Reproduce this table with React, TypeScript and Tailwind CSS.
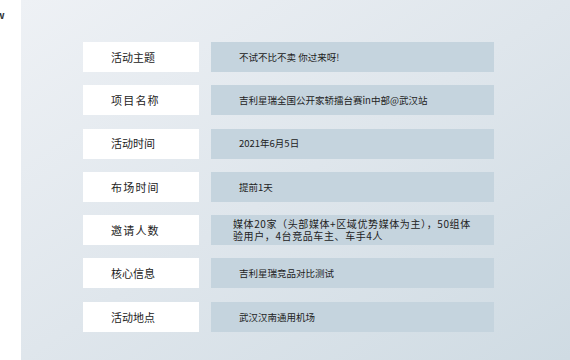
import React from "react";

const rows: { label: string; value: React.ReactNode; wide?: boolean }[] = [
  { label: "活动主题", value: "不试不比不卖 你过来呀!" },
  { label: "项目名称", value: "吉利星瑞全国公开家轿擂台赛in中部@武汉站", wide: true },
  { label: "活动时间", value: "2021年6月5日" },
  { label: "布场时间", value: "提前1天", wide: true },
  {
    label: "邀请人数",
    wide: true,
    value: (
      <div className="flex flex-col text-[10px] leading-[12px] tracking-[0.6px] -ml-[6px]">
        <span className="block">媒体20家（头部媒体+区域优势媒体为主），50组体</span>
        <span className="block">验用户，4台竞品车主、车手4人</span>
      </div>
    ),
  },
  { label: "核心信息", value: "吉利星瑞竞品对比测试" },
  { label: "活动地点", value: "武汉汉南通用机场" },
];

export default function App() {
  return (
    <div
      className="w-[570px] h-[360px] flex bg-white overflow-hidden text-[#222]"
      style={{ fontFamily: '"Noto Sans CJK SC", "Noto Sans", sans-serif' }}
    >
      <div className="w-[21px] shrink-0 bg-white">
        <span className="block -ml-[4px] mt-[10px] text-[10px] font-bold leading-none text-[#333]">w</span>
      </div>
      <div className="flex-1 bg-gradient-to-br from-[#eef1f5] via-[#dfe6ec] to-[#cfdbe3] pt-[42px] pl-[62px]">
        <div className="flex flex-col gap-[13.3px] w-[411px]">
          {rows.map((r) => (
            <div key={r.label} className="flex gap-[12px] h-[30px]">
              <div
                className={`w-[116px] bg-white flex items-center pl-[28px] text-[11px] ${
                  r.wide ? "tracking-[1.2px]" : ""
                }`}
              >
                {r.label}
              </div>
              <div className="flex-1 bg-[#c5d4de] flex items-center pl-[28px] text-[9.5px]">
                {r.value}
              </div>
            </div>
          ))}
        </div>
      </div>
    </div>
  );
}
